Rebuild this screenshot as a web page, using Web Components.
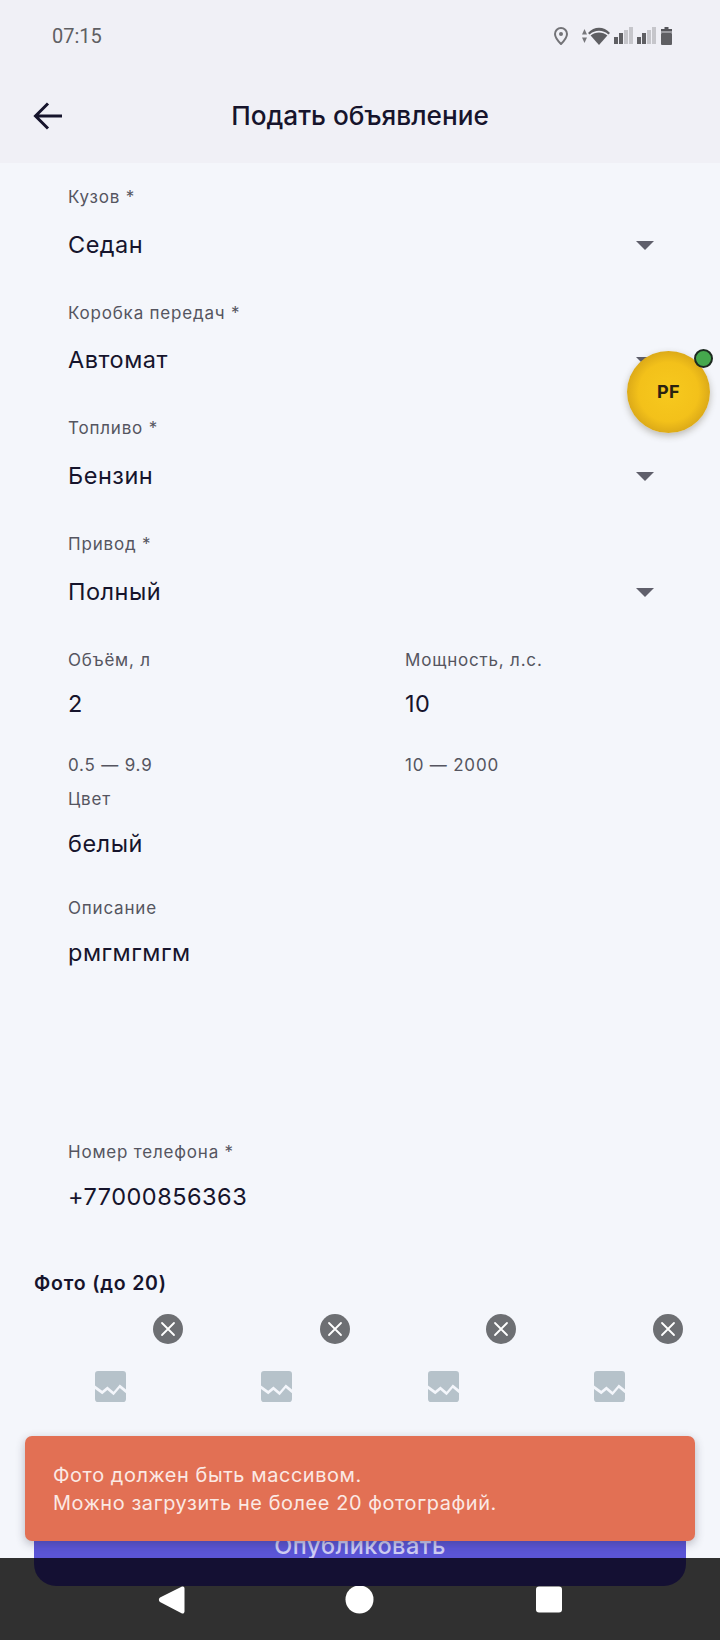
<!DOCTYPE html>
<html lang="ru">
<head>
<meta charset="utf-8">
<title>Подать объявление</title>
<style>
  html, body { margin: 0; padding: 0; }
  body { width: 720px; height: 1640px; overflow: hidden; background: #f4f6fb; font-family: Inter, "Noto Sans", sans-serif; color: #16142c; }
  ad-screen { display: block; }
</style>
</head>
<body>
<ad-screen>
  <status-bar></status-bar>
  <app-header>Подать объявление</app-header>
  <div slot="form">
    <select-field label="Кузов *">Седан</select-field>
    <select-field label="Коробка передач *">Автомат</select-field>
    <select-field label="Топливо *">Бензин</select-field>
    <select-field label="Привод *">Полный</select-field>
  </div>
  <text-field slot="left" label="Объём, л" hint="0.5 — 9.9">2</text-field>
  <text-field slot="right" label="Мощность, л.с." hint="10 — 2000">10</text-field>
  <text-field slot="color" label="Цвет">белый</text-field>
  <text-field slot="desc" label="Описание">рмгмгмгм</text-field>
  <text-field slot="phone" label="Номер телефона *">+77000856363</text-field>
  <photo-strip slot="photos" title="Фото (до 20)" count="4"></photo-strip>
  <floating-badge slot="over">PF</floating-badge>
  <nav-bar slot="over"></nav-bar>
  <publish-button slot="over">Опубликовать</publish-button>
  <toast-message slot="over">Фото должен быть массивом.<br>Можно загрузить не более 20 фотографий.</toast-message>
</ad-screen>

<script>
// small helper so each component only has to give its html
class Base extends HTMLElement {
  constructor() {
    super();
    this.attachShadow({ mode: 'open' });
  }
  connectedCallback() {
    this.shadowRoot.innerHTML = this.render();
  }
}

class AdScreen extends Base {
  render() {
    return `<style>
      :host { display: block; position: relative; width: 720px; height: 1640px; overflow: hidden; }
      .indent { padding: 0 66px 0 68px; }
      .two { display: grid; grid-template-columns: 337px 1fr; height: 139.7px; }
      .color { height: 108.9px; }
      .desc { height: 243.8px; }
      .phone { height: 130px; }
    </style>
    <slot></slot>
    <div class="indent">
      <slot name="form"></slot>
      <div class="two"><slot name="left"></slot><slot name="right"></slot></div>
      <div class="color"><slot name="color"></slot></div>
      <div class="desc"><slot name="desc"></slot></div>
      <div class="phone"><slot name="phone"></slot></div>
    </div>
    <slot name="photos"></slot>
    <slot name="over"></slot>`;
  }
}

class StatusBar extends Base {
  render() {
    const bars = `<svg width="19" height="18" viewBox="0 0 19 18" fill="#5f5f63">
      <rect x="0" y="10" width="4" height="7"/><rect x="5" y="6" width="4" height="11"/>
      <rect x="10" y="3" width="4" height="14" fill="#c6c6cb"/><rect x="15" y="0" width="4" height="17" fill="#c6c6cb"/></svg>`;
    return `<style>
      :host { display: flex; align-items: center; justify-content: space-between; box-sizing: border-box; height: 72px; padding: 0 48px 0 52px; background: #f0f0f6; }
      .time { font: 400 20px/1 Roboto, sans-serif; color: #5f5f63; }
      .icons { display: flex; align-items: center; height: 24px; }
      svg { display: block; }
    </style>
    <span class="time">07:15</span>
    <div class="icons">
      <svg width="14" height="18" viewBox="0 0 14 18" style="margin-right:14px"><path d="M7 1a6 6 0 0 0-6 6c0 4 6 10 6 10s6-6 6-10a6 6 0 0 0-6-6z" fill="none" stroke="#737377" stroke-width="2"/><circle cx="7" cy="7" r="2" fill="#737377"/></svg>
      <svg width="5" height="14" viewBox="0 0 5 14" style="margin-right:1px" fill="#77777b"><path d="M2.500 0 5 5.500H0zM2.500 14 0 8.500h5z"/></svg>
      <svg width="22" height="18" viewBox="0 0 22 18" fill="#5f5f63" style="margin-right:4px"><path d="M0 6C6-1 16-1 22 6l-1.600 1.600C15 2.600 7 2.600 1.600 7.600z"/><path d="M2.600 8.500C7.200 4.400 14.800 4.400 19.400 8.500L11 18z"/></svg>
      ${bars}<span style="width:4px"></span>${bars}
      <svg width="11" height="18" viewBox="0 0 11 18" style="margin-left:5px"><path d="M3.500 0h4v2h3.500v3H0V2h3.500z" fill="#55555a"/><rect y="6" width="11" height="12" rx="1" fill="#5f5f63"/><rect x="0" y="4" width="11" height="2" fill="#9a9a9f"/></svg>
    </div>`;
  }
}

class AppHeader extends Base {
  render() {
    return `<style>
      :host { display: flex; align-items: center; box-sizing: border-box; height: 91px; margin-bottom: 22px; background: #f0f0f6; padding: 0 63px 4px 33px; }
      svg { display: block; }
      h1 { flex: 1; margin: 0; font: 500 26.2px/1.200 Inter, sans-serif; color: #16142c; text-align: center; white-space: nowrap; }
    </style>
    <svg width="30" height="28" viewBox="0 0 30 28" fill="none" stroke="#16142c" stroke-width="3"><path d="M29 14H2.500M15 1.500 2.500 14 15 26.500"/></svg>
    <h1><slot></slot></h1>`;
  }
}

const fieldCss = `
  .label { display: block; font: 400 17px/24px Inter, sans-serif; letter-spacing: .8px; color: #555560; }
  .value { display: block; font: 400 23.5px/30px Inter, sans-serif; letter-spacing: .5px; color: #16142c; }
`;

class SelectField extends Base {
  render() {
    return `<style>
      :host { display: block; position: relative; height: 115.7px; }
      ${fieldCss}
      .value { margin-top: 20.5px; }
      .arrow { position: absolute; right: 0; top: 56px; width: 0; height: 0; border-left: 9px solid transparent; border-right: 9px solid transparent; border-top: 9px solid #5f5f6b; }
    </style>
    <span class="label">${this.getAttribute('label')}</span>
    <span class="value"><slot></slot></span>
    <span class="arrow"></span>`;
  }
}

class TextField extends Base {
  render() {
    const hint = this.getAttribute('hint');
    return `<style>
      :host { display: block; }
      ${fieldCss}
      .value { margin-top: 17.5px; }
      .hint { display: block; font: 400 17px/24px Inter, sans-serif; letter-spacing: .8px; color: #555560; margin-top: 34px; }
    </style>
    <span class="label">${this.getAttribute('label')}</span>
    <span class="value"><slot></slot></span>
    ${hint ? `<span class="hint">${hint}</span>` : ''}`;
  }
}

class PhotoStrip extends Base {
  render() {
    const n = Number(this.getAttribute('count'));
    const cell = `<div class="cell">
      <span class="close"><svg width="16" height="16" viewBox="0 0 16 16" stroke="#fff" stroke-width="1.800" stroke-linecap="round"><path d="M2 2 14 14M14 2 2 14"/></svg></span>
      <svg class="pic" width="31" height="31" viewBox="0 0 30 30"><path d="M3 0h24a3 3 0 0 1 3 3v15l-6-5-6 7-6-5-5 4-7-5V3a3 3 0 0 1 3-3z" fill="#b6c2ca"/><path d="M0 17.500l7 5 5-4 6 5 6-7 6 5V27a3 3 0 0 1-3 3H3a3 3 0 0 1-3-3z" fill="#b6c2ca"/></svg>
    </div>`;
    return `<style>
      :host { display: block; padding: 0 34px; }
      h2 { margin: 0; font: 600 19.500px/26px Inter, sans-serif; letter-spacing: .8px; color: #16142c; }
      .row { display: flex; gap: 20.5px; margin: 17.8px 0 0 3.3px; }
      .cell { position: relative; width: 146px; height: 146px; display: flex; align-items: center; justify-content: center; }
      .close { position: absolute; right: 0; top: 0; width: 30px; height: 30px; border-radius: 50%; background: #6d6f73; display: flex; align-items: center; justify-content: center; }
      .close svg { display: block; }
      .pic { display: block; }
    </style>
    <h2>${this.getAttribute('title')}</h2>
    <div class="row">${cell.repeat(n)}</div>`;
  }
}

class PublishButton extends Base {
  render() {
    return `<style>
      :host { display: flex; justify-content: center; box-sizing: border-box; position: absolute; left: 34px; top: 1494px; width: 652px; height: 92px; border-radius: 0 0 22px 22px;
        background: linear-gradient(#5b55d6 0, #5b55d6 64px, #141033 64px); }
      span { font: 500 23.5px/30px Inter, sans-serif; letter-spacing: .5px; color: #cfcdf4; margin-top: 37px; height: 27px; overflow: hidden; }
    </style>
    <span><slot></slot></span>`;
  }
}

class FloatingBadge extends Base {
  render() {
    return `<style>
      :host { display: flex; align-items: center; justify-content: center; position: absolute; left: 627px; top: 351px; width: 83px; height: 82px; border-radius: 50%;
        background: radial-gradient(closest-side, #f7c91e 0, #f3c11a 72%, #dcaa18 100%); box-shadow: 0 3px 7px rgba(60,50,20,.3);
        font: 700 18px/1 Inter, sans-serif; letter-spacing: .5px; color: #2a2210; }
      i { position: absolute; right: -3px; top: -2px; width: 15px; height: 15px; border-radius: 50%; background: #45a84d; border: 2px solid #1c2a20; }
    </style>
    <slot></slot><i></i>`;
  }
}

class ToastMessage extends Base {
  render() {
    return `<style>
      :host { display: flex; align-items: center; box-sizing: border-box; position: absolute; left: 25px; top: 1436px; width: 670px; height: 105px; padding: 0 28px; border-radius: 7px;
        background: #e27054; box-shadow: 0 3px 10px rgba(40,40,60,.3);
        font: 400 19.900px/28px Inter, sans-serif; letter-spacing: .6px; color: #fbe9e4; }
    </style>
    <div><slot></slot></div>`;
  }
}

class NavBar extends Base {
  render() {
    return `<style>
      :host { display: block; position: absolute; left: 0; top: 1558px; width: 720px; height: 82px; background: #303030; }
      svg { position: absolute; top: 27px; display: block; }
    </style>
    <svg style="left:157px" width="28" height="30" viewBox="0 0 28 30" fill="#fff"><path d="M25 1.500 3 12.500a2.800 2.800 0 0 0 0 4.500l22 11.500a2 2 0 0 0 2.500-2V3.500a2 2 0 0 0-2.500-2z"/></svg>
    <svg style="left:345px" width="30" height="30" viewBox="0 0 30 30" fill="#fff"><circle cx="14.500" cy="14.500" r="14"/></svg>
    <svg style="left:535px" width="28" height="30" viewBox="0 0 28 30" fill="#fff"><rect x="1" y="1.500" width="26" height="26" rx="3"/></svg>`;
  }
}

customElements.define('ad-screen', AdScreen);
customElements.define('status-bar', StatusBar);
customElements.define('app-header', AppHeader);
customElements.define('select-field', SelectField);
customElements.define('text-field', TextField);
customElements.define('photo-strip', PhotoStrip);
customElements.define('publish-button', PublishButton);
customElements.define('floating-badge', FloatingBadge);
customElements.define('toast-message', ToastMessage);
customElements.define('nav-bar', NavBar);
</script>
</body>
</html>
